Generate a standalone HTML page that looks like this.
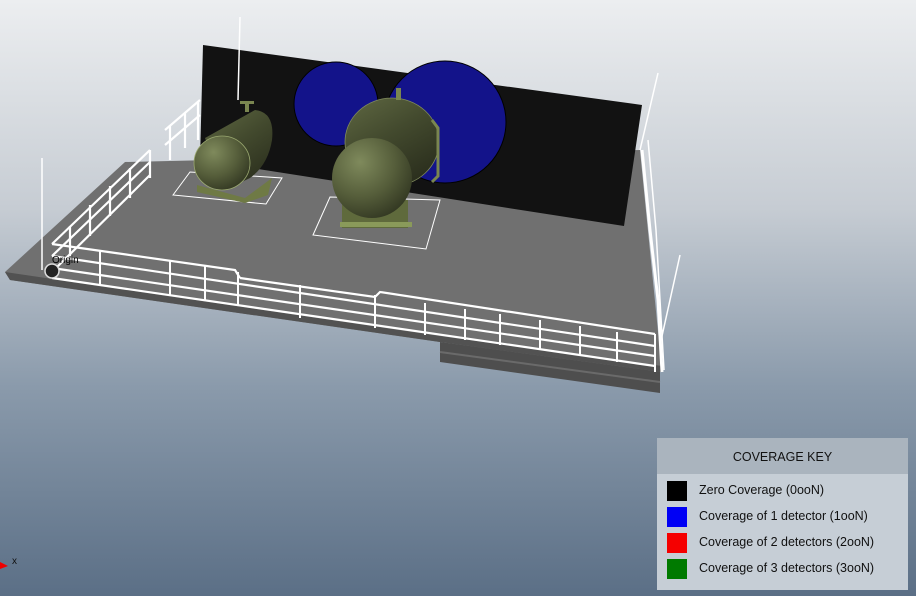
<!DOCTYPE html>
<html><head><meta charset="utf-8">
<style>
html,body{margin:0;padding:0;}
body{width:916px;height:596px;overflow:hidden;position:relative;background:linear-gradient(#eceef0 0%,#c6ccd3 35%,#8a9aab 65%,#5b6f86 100%);font-family:"Liberation Sans","DejaVu Sans",sans-serif;}
svg{position:absolute;left:0;top:0;}
.key{position:absolute;left:657px;top:438px;width:251px;height:152px;background:#c6ced6;}
.key .hd{height:36px;background:#aab4be;text-align:center;line-height:38px;font-size:12.5px;color:#111;}
.row{position:absolute;left:10px;height:20px;font-size:12.5px;color:#111;}
.row i{position:absolute;left:0;top:0;width:20px;height:20px;}
.row span{position:absolute;left:32px;top:2px;white-space:nowrap;}
</style></head><body>
<svg width="916" height="596" viewBox="0 0 916 596">
<defs>
<radialGradient id="tk" cx="0.35" cy="0.3" r="0.8"><stop offset="0" stop-color="#7f8a5c"/><stop offset="0.55" stop-color="#555d3a"/><stop offset="1" stop-color="#2e331f"/></radialGradient>
<linearGradient id="cyl" x1="0" y1="0" x2="0.6" y2="1"><stop offset="0" stop-color="#5f6842"/><stop offset="0.5" stop-color="#434a2e"/><stop offset="1" stop-color="#2c301e"/></linearGradient>
</defs>
<polygon points="440,342 660,370 660,393 440,362" fill="#4e4e4e"/>
<line x1="440" y1="352" x2="660" y2="382" stroke="#6a6a6a" stroke-width="2"/>
<polygon points="5,272 125,162 640,150 662,372 440,342 10,280" fill="#707070"/>
<polygon points="5,272 440,336 662,366 662,372 440,342 10,280" fill="#525252"/>
<polygon points="203,45 642,105 624,226 200,160" fill="#121212"/>
<circle cx="336" cy="104" r="42" fill="#13138a" stroke="#000"/>
<circle cx="445" cy="122" r="61" fill="#13138a" stroke="#000"/>
<polygon points="173,195 190,172 282,178 266,204" fill="none" stroke="#fff"/>
<polygon points="313,235 330,197 440,200 426,249" fill="none" stroke="#fff"/>
<polygon points="197,185 245,198 272,178 268,195 245,203 197,192" fill="#6f7a45"/>
<path d="M205,138 L255,110 Q275,112 272,140 Q268,165 250,178 L225,190 Z" fill="url(#cyl)"/>
<ellipse cx="222" cy="163" rx="28" ry="27" fill="url(#tk)" stroke="#9aa870" stroke-width="0.8"/>
<rect x="245" y="102" width="4" height="10" fill="#7a8650"/><rect x="240" y="101" width="14" height="3" fill="#7a8650"/>
<rect x="342" y="200" width="66" height="28" fill="#5f6a3c"/>
<rect x="340" y="222" width="72" height="5" fill="#8a9a5a"/>
<ellipse cx="392" cy="142" rx="47" ry="44" fill="url(#cyl)" stroke="#7f8a5c" stroke-width="0.8"/>
<ellipse cx="372" cy="178" rx="40" ry="40" fill="url(#tk)"/>
<path d="M432,120 l6,8 v48 l-6,6" stroke="#7a8650" stroke-width="3" fill="none"/>
<rect x="396" y="88" width="5" height="12" fill="#7a8650"/>
<g stroke="#fff" stroke-width="2.2" fill="none">
<polyline points="52,244 235,270 240,278"/>
<polyline points="240,278 375,297 380,292 655,334"/>
<line x1="52" y1="256" x2="655" y2="346"/>
<line x1="52" y1="268" x2="655" y2="356"/>
<line x1="52" y1="278" x2="655" y2="366"/>
<g stroke-width="2">
<line x1="100" y1="250" x2="100" y2="285"/><line x1="170" y1="260" x2="170" y2="295"/>
<line x1="205" y1="265" x2="205" y2="300"/><line x1="238" y1="272" x2="238" y2="306"/>
<line x1="300" y1="285" x2="300" y2="318"/><line x1="375" y1="295" x2="375" y2="328"/>
<line x1="425" y1="303" x2="425" y2="335"/><line x1="465" y1="309" x2="465" y2="340"/>
<line x1="500" y1="314" x2="500" y2="345"/><line x1="540" y1="320" x2="540" y2="350"/>
<line x1="580" y1="326" x2="580" y2="356"/><line x1="617" y1="332" x2="617" y2="362"/>
<line x1="655" y1="334" x2="655" y2="372"/>
</g>
<polyline points="52,244 150,150"/><polyline points="52,256 150,162"/><polyline points="56,268 150,175"/>
<line x1="70" y1="226" x2="70" y2="256"/><line x1="90" y1="205" x2="90" y2="236"/><line x1="110" y1="186" x2="110" y2="216"/><line x1="130" y1="168" x2="130" y2="198"/><line x1="150" y1="150" x2="150" y2="178"/>
<polyline points="165,130 200,100"/><polyline points="165,145 200,115"/><line x1="170" y1="125" x2="170" y2="160"/><line x1="185" y1="113" x2="185" y2="148"/><line x1="198" y1="102" x2="198" y2="140"/>
<line x1="42" y1="158" x2="42" y2="270" stroke-width="1.5"/>
<line x1="240" y1="17" x2="238" y2="100" stroke-width="1.5"/>
<line x1="658" y1="73" x2="640" y2="150" stroke-width="1.5"/>
<line x1="680" y1="255" x2="660" y2="345" stroke-width="1.5"/>
<polyline points="642,150 650,230 658,300 662,372" stroke-width="3"/>
<polyline points="648,140 656,230 664,370" stroke-width="1.5"/>
</g>
<circle cx="52" cy="271" r="7" fill="#222" stroke="#ddd" stroke-width="1.5"/>
<text x="52" y="263" font-size="10" fill="#000" font-family="Liberation Sans,sans-serif">Origin</text>
<polygon points="0,562 8,566 0,569" fill="#e00"/>
<text x="12" y="564" font-size="10" fill="#111" font-family="Liberation Sans,sans-serif">x</text>
</svg>
<div class="key"><div class="hd">COVERAGE KEY</div>
<div class="row" style="top:43px"><i style="background:#000"></i><span>Zero Coverage (0ooN)</span></div>
<div class="row" style="top:69px"><i style="background:#0000f5"></i><span>Coverage of 1 detector (1ooN)</span></div>
<div class="row" style="top:95px"><i style="background:#f50000"></i><span>Coverage of 2 detectors (2ooN)</span></div>
<div class="row" style="top:121px"><i style="background:#007a00"></i><span>Coverage of 3 detectors (3ooN)</span></div>
</div>
</body></html>
